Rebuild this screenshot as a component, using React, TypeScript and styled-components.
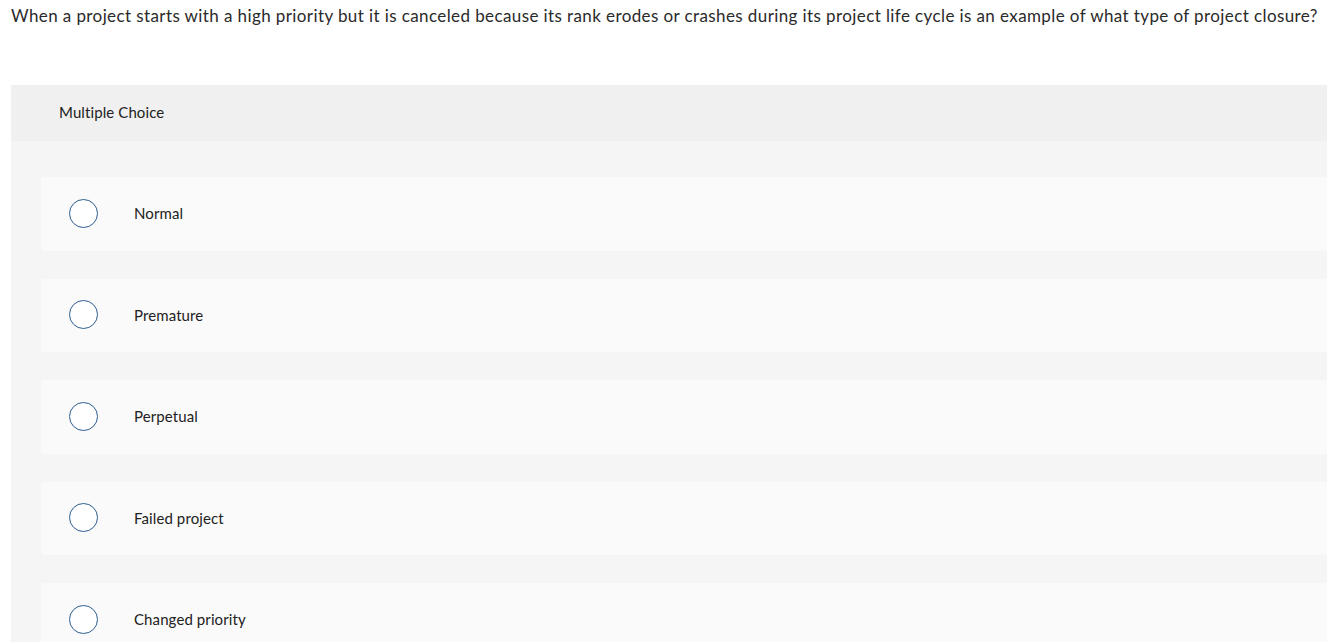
import React from 'react';
import styled, { createGlobalStyle } from 'styled-components';

const GlobalStyle = createGlobalStyle`
  html, body {
    margin: 0;
    padding: 0;
    background: #ffffff;
    overflow: hidden;
  }
  body {
    font-family: Lato, "Open Sans", "Liberation Sans", sans-serif;
    color: #1f1f1f;
  }
`;

const Page = styled.div`
  width: 1327px;
  padding-top: 4px;
`;

const Question = styled.p`
  margin: 0 0 0 11px;
  font-size: 17px;
  line-height: 24px;
  letter-spacing: 0.4px;
  color: #2a2a2a;
  white-space: nowrap;
`;

const Panel = styled.section`
  margin: 57px 0 0 11px;
  background: #f5f5f5;
`;

const PanelHeader = styled.div`
  height: 56px;
  box-sizing: border-box;
  display: flex;
  align-items: center;
  padding: 0 0 3px 48px;
  background: #f0f0f0;
  font-size: 15px;
  letter-spacing: 0.1px;
  color: #222222;
`;

const ChoiceList = styled.div`
  display: flex;
  flex-direction: column;
  gap: 28px;
  padding: 36px 0 28px 30px;
`;

const Choice = styled.label`
  height: 73.5px;
  display: flex;
  align-items: center;
  padding: 0 0 1px 28px;
  box-sizing: border-box;
  background: #fafafa;
  border-radius: 4px 0 0 4px;
  font-size: 15px;
  letter-spacing: 0.1px;
  color: #222222;
  cursor: pointer;
`;

const Radio = styled.span`
  width: 29px;
  height: 29px;
  box-sizing: border-box;
  border-radius: 50%;
  border: 1.5px solid #2d5d8e;
  background: #ffffff;
  flex-shrink: 0;
  margin-right: 36px;
`;

const choices = ['Normal', 'Premature', 'Perpetual', 'Failed project', 'Changed priority'];

export default function App() {
  return (
    <Page>
      <GlobalStyle />
      <Question>
        When a project starts with a high priority but it is canceled because its rank erodes or crashes during its project life cycle is an example of what type of project closure?
      </Question>
      <Panel>
        <PanelHeader>Multiple Choice</PanelHeader>
        <ChoiceList>
          {choices.map(c => (
            <Choice key={c}>
              <Radio />
              {c}
            </Choice>
          ))}
        </ChoiceList>
      </Panel>
    </Page>
  );
}
